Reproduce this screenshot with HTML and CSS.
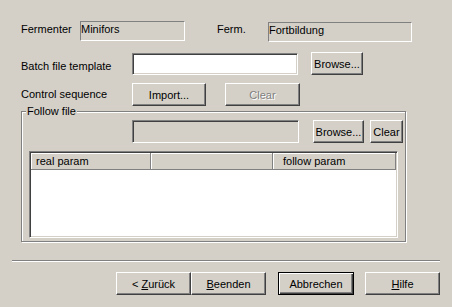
FILE: index.html
```html
<!DOCTYPE html>
<html>
<head>
<meta charset="utf-8">
<link rel="stylesheet" href="styles.css">
</head>
<body>
<div class="dialog">
  <div class="row r1">
    <span class="lbl w-ferm">Fermenter</span>
    <div class="field ro f1">Minifors</div>
    <span class="lbl w-ferm2">Ferm.</span>
    <div class="field ro f2">Fortbildung</div>
  </div>
  <div class="row r2">
    <span class="lbl w-main lbl-low">Batch file template</span>
    <div class="field edit f3"></div>
    <button class="btn browse1">Browse...</button>
  </div>
  <div class="row r3">
    <span class="lbl w-main">Control sequence</span>
    <button class="btn import">Import...</button>
    <button class="btn clear1" disabled>Clear</button>
  </div>
  <div class="group">
    <span class="group-title">Follow file</span>
    <div class="row r4">
      <div class="field edit disabled f4"></div>
      <button class="btn browse2">Browse...</button>
      <button class="btn clear2">Clear</button>
    </div>
    <div class="list">
      <div class="list-head">
        <div class="hcell c1">real param</div>
        <div class="hcell c2"></div>
        <div class="hcell c3">follow param</div>
      </div>
    </div>
  </div>
  <div class="sep"></div>
  <div class="buttons">
    <button class="btn nav back">&lt; <u>Z</u>urück</button>
    <button class="btn nav finish"><u>B</u>eenden</button>
    <button class="btn nav cancel default">Abbrechen</button>
    <button class="btn nav help"><u>H</u>ilfe</button>
  </div>
</div>
</body>
</html>
```
FILE: styles.css
```css
* { box-sizing: border-box; }
html, body {
  margin: 0;
  padding: 0;
  background: #d4d0c8;
}
body {
  width: 452px;
  height: 307px;
  overflow: hidden;
  font-family: "Liberation Sans", Arial, sans-serif;
  font-size: 11px;
  color: #000;
}
.dialog {
  padding-top: 21px;
}
.row {
  display: flex;
  align-items: center;
}
.r1 { height: 20px; padding-left: 21px; align-items: flex-start; }
.r2 { height: 23px; margin-top: 11px; padding-left: 21px; align-items: flex-end; }
.r3 { height: 23px; margin-top: 8px; padding-left: 21px; }
.lbl { white-space: nowrap; line-height: 13px; }
.r1 .lbl { line-height: 14px; margin-top: 1px; }
.w-ferm { width: 59px; }
.w-ferm2 { width: 51px; margin-left: 32px; }
.w-main { width: 111px; }
.lbl-low { align-self: center; padding-top: 6px; }

.field {
  height: 20px;
  white-space: nowrap;
}
.ro {
  border: 1px solid;
  border-color: #808080 #fff #fff #808080;
  padding-left: 0;
  line-height: 14px;
}
.f1 { width: 105px; }
.f2 { width: 144px; height: 20px; margin-top: 1px; }
.edit {
  border: 1px solid;
  border-color: #808080 #fff #fff #808080;
  box-shadow: inset 1px 1px 0 #404040, inset -1px -1px 0 #d4d0c8;
  background: #fff;
}
.f3 { width: 166px; height: 22px; }
.disabled { background: #d4d0c8; }

.btn {
  font-family: inherit;
  font-size: 11px;
  color: #000;
  background: #d4d0c8;
  border: 1px solid;
  border-color: #fff #404040 #404040 #fff;
  box-shadow: inset -1px -1px 0 #808080;
  padding: 1px 0 0 0;
  margin: 0;
  height: 23px;
  line-height: 20px;
  text-align: center;
  white-space: nowrap;
  border-radius: 0;
}
.btn u { text-decoration: underline; }
.btn[disabled] {
  color: #808080;
  text-shadow: 1px 1px 0 #fff;
}
.browse1 { width: 52px; margin-left: 13px; }
.import { width: 74px; }
.clear1 { width: 75px; margin-left: 19px; }

.group {
  position: relative;
  margin: 5px 0 0 21px;
  width: 385px;
  height: 131px;
  border: 1px solid #808080;
  box-shadow: inset 1px 1px 0 #fff, 1px 1px 0 #fff;
  padding-top: 8px;
}
.group-title {
  position: absolute;
  left: 4px;
  top: -7px;
  padding: 0 1px;
  line-height: 13px;
  background: #d4d0c8;
}
.r4 { height: 23px; padding-left: 110px; }
.f4 { width: 167px; height: 23px; }
.browse2 { width: 51px; margin-left: 14px; }
.clear2 { width: 33px; margin-left: 6px; }

.list {
  margin: 8px 0 0 7px;
  width: 369px;
  height: 87px;
  background: #fff;
  border: 1px solid;
  border-color: #808080 #fff #fff #808080;
  box-shadow: inset 1px 1px 0 #404040, inset -1px -1px 0 #d4d0c8;
  padding: 1px;
}
.list-head {
  display: flex;
  height: 17px;
}
.hcell {
  background: #d4d0c8;
  border-right: 1px solid #808080;
  border-bottom: 1px solid #808080;
  box-shadow: inset 1px 1px 0 #fff;
  line-height: 16px;
  white-space: nowrap;
}
.c1 { width: 120px; padding-left: 5px; }
.c2 { width: 122px; }
.c3 { width: 123px; padding-left: 10px; }

.sep {
  margin: 18px 12px 0 12px;
  height: 2px;
  border-top: 1px solid #808080;
  border-bottom: 1px solid #fff;
}
.buttons {
  display: flex;
  margin-top: 10px;
  padding-left: 116px;
}
.nav { width: 75px; padding-top: 0; }
.finish { margin-left: 0; }
.cancel { margin-left: 12px; width: 76px; }
.help { margin-left: 11px; }
.default {
  border: 1px solid #000;
  box-shadow: inset 1px 1px 0 #fff, inset -1px -1px 0 #404040, inset -2px -2px 0 #808080;
}
```
